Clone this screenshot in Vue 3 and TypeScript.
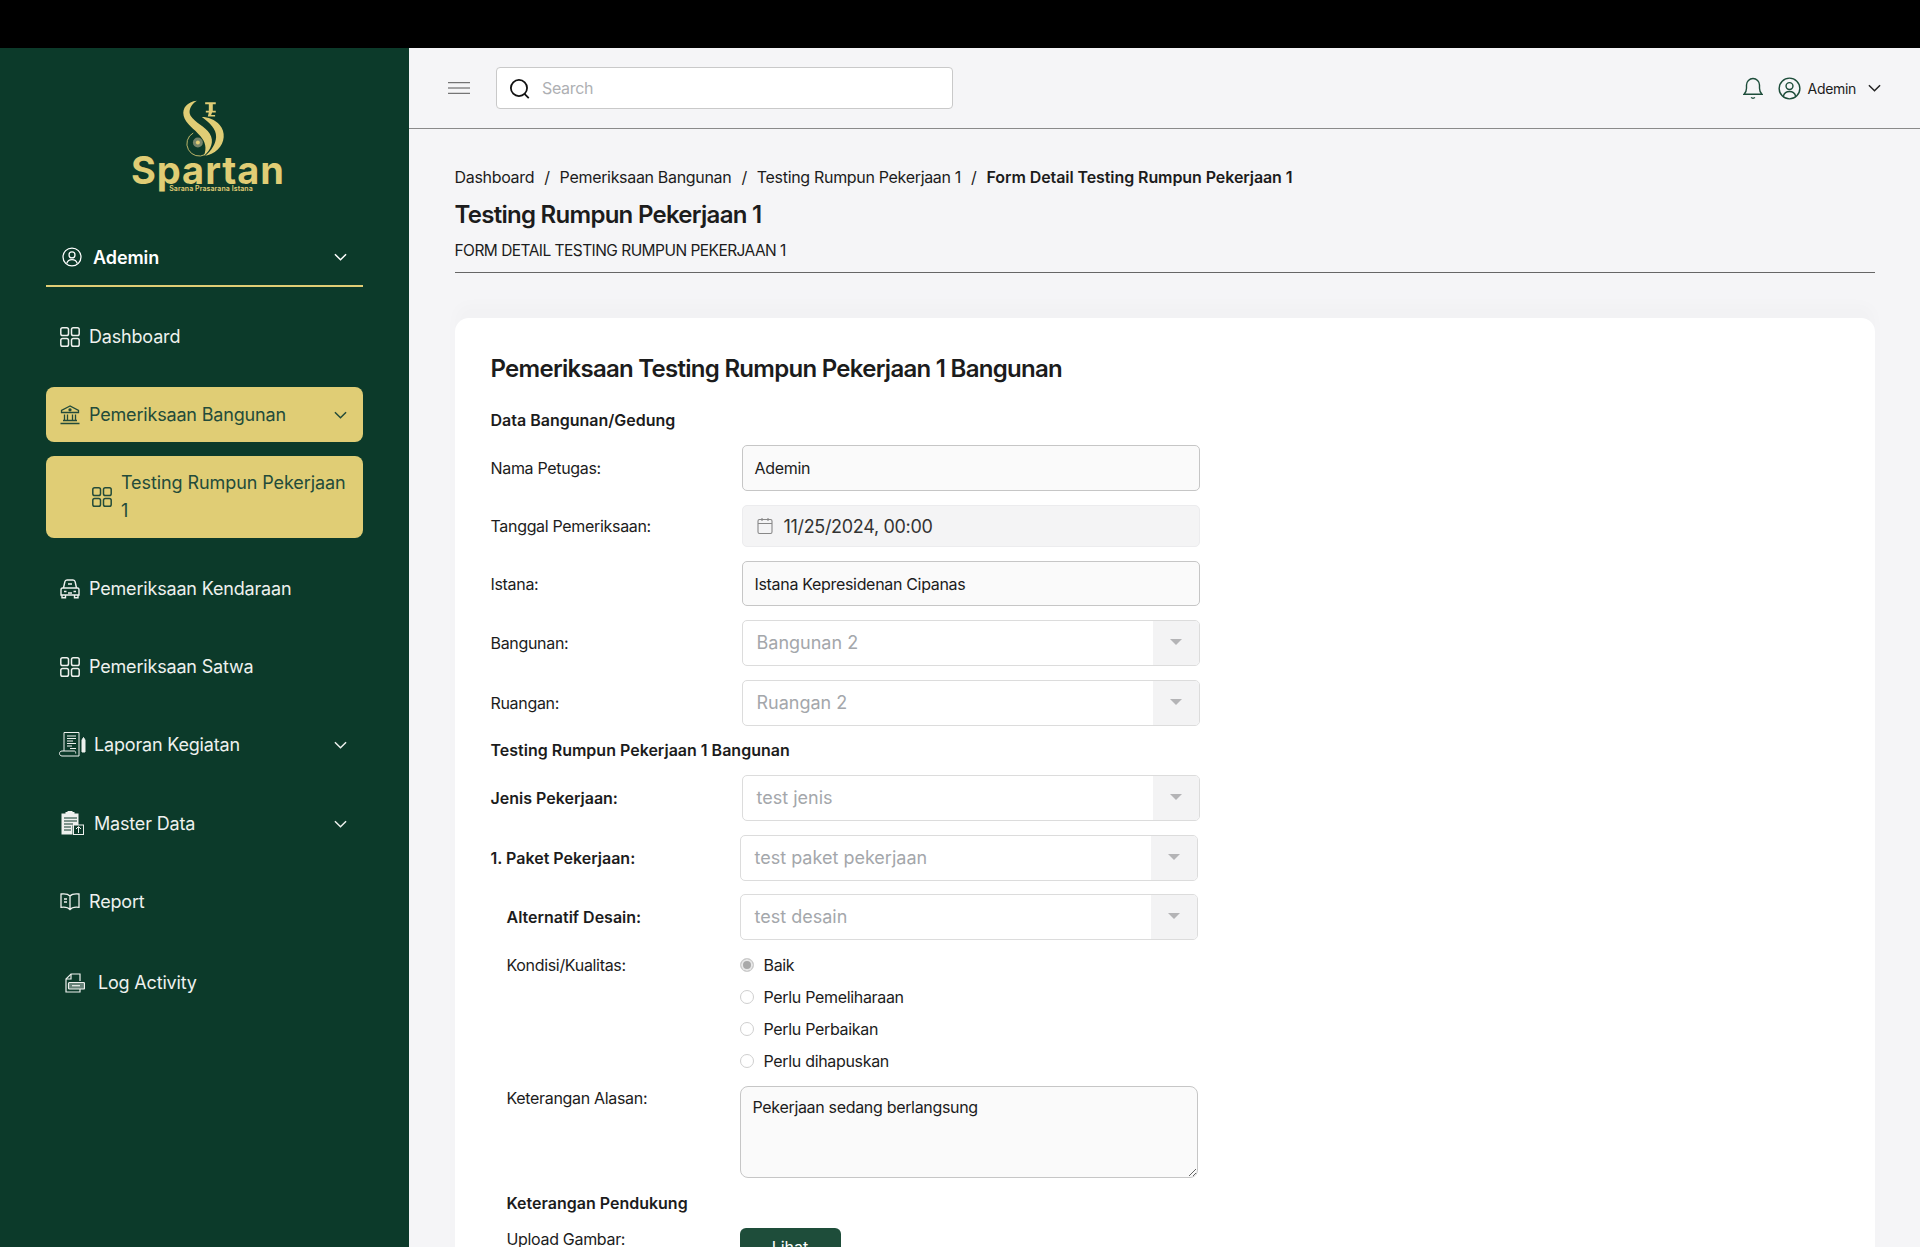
<template>
  <div class="page">
    <div class="top-strip"></div>
    <div class="shell">
      <!-- sidebar -->
      <aside class="sidebar">
        <div class="logo">
          <svg class="logo-mark" viewBox="540 175 160 180" fill="#e0cd75">
            <path d="M597 183C568 186 552 205 557 228C562 252 590 268 608 290C622 307 628 325 618 349C640 330 650 305 636 282C622 260 590 248 578 228C570 214 578 195 597 183Z" />
            <path d="M612 232C630 232 652 240 666 256C684 276 682 310 660 330C648 341 635 347 622 349C642 332 654 312 655 292C656 268 636 250 612 232Z" />
            <path d="M622 187h32v6h-9v20h9v5h-11l-3 8h12v4h-22l3-12h-9v-5h9v-20h-11z" />
            <path d="M586 280A33 33 0 1 0 622 345" fill="none" stroke="#e0cd75" stroke-width="2.5" />
            <circle cx="600" cy="309" r="15" fill="#76846a" />
            <circle cx="600" cy="309" r="6" fill="#e0cd75" />
          </svg>
          <div class="logo-name">Spartan</div>
          <div class="logo-tag">Sarana Prasarana Istana</div>
        </div>

        <div class="user-row">
          <svg class="user-icon" viewBox="0 0 24 24" fill="none" stroke="#fff" stroke-width="1.5">
            <circle cx="12" cy="12" r="10.8" />
            <circle cx="12" cy="9.5" r="3.6" />
            <path d="M5.600 19.800c1-3.200 3.400-4.600 6.400-4.600s5.400 1.400 6.400 4.600" />
          </svg>
          <span class="user-name">Ademin</span>
          <svg class="chev" viewBox="0 0 14 8" fill="none" stroke="currentColor" stroke-width="1.6"><path d="M1 1l6 6 6-6" /></svg>
        </div>

        <nav class="nav">
          <a class="nav-item">
            <svg class="ico" viewBox="0 0 20 20" fill="none" stroke="currentColor" stroke-width="1.5"><rect x=".8" y=".8" width="7.700" height="7.700" rx="1.800" /><rect x="11.500" y=".8" width="7.700" height="7.700" rx="1.800" /><rect x=".8" y="11.500" width="7.700" height="7.700" rx="1.800" /><rect x="11.500" y="11.500" width="7.700" height="7.700" rx="1.800" /></svg>
            <span>Dashboard</span>
          </a>

          <a class="nav-item active">
            <svg class="ico" viewBox="0 0 20 20" fill="none" stroke="currentColor" stroke-width="1.3"><path d="M10 1L1.500 5.500v2h17v-2z" /><circle cx="10" cy="4.800" r="1" fill="currentColor" /><path d="M4.500 9.500v5.500M7.500 9.500v5.500M12.500 9.500v5.500M15.500 9.500v5.500M3 15.500h14M.5 18.500h19" /></svg>
            <span>Pemeriksaan Bangunan</span>
            <svg class="chev" viewBox="0 0 14 8" fill="none" stroke="currentColor" stroke-width="1.6"><path d="M1 1l6 6 6-6" /></svg>
          </a>

          <a class="nav-sub">
            <svg class="ico" viewBox="0 0 20 20" fill="none" stroke="currentColor" stroke-width="1.5"><rect x=".8" y=".8" width="7.700" height="7.700" rx="1.800" /><rect x="11.500" y=".8" width="7.700" height="7.700" rx="1.800" /><rect x=".8" y="11.500" width="7.700" height="7.700" rx="1.800" /><rect x="11.500" y="11.500" width="7.700" height="7.700" rx="1.800" /></svg>
            <span>Testing Rumpun Pekerjaan 1</span>
          </a>

          <a class="nav-item">
            <svg class="ico" viewBox="0 0 20 20" fill="none" stroke="currentColor" stroke-width="1.4"><path d="M3.500 9l1.300-6C5 1.800 5.800 1 7 1h6c1.200 0 2 .8 2.200 2l1.300 6" /><path d="M2.500 9h15c.7 0 1.500 1 1.500 2v5H1v-5c0-1 .8-2 1.500-2z" /><path d="M2 16v2.800h3.500V16M14.500 16v2.800H18V16M4 12.500h2.500M13.500 12.500H16M8 14h4M8 5h4" /></svg>
            <span>Pemeriksaan Kendaraan</span>
          </a>

          <a class="nav-item">
            <svg class="ico" viewBox="0 0 20 20" fill="none" stroke="currentColor" stroke-width="1.5"><rect x=".8" y=".8" width="7.700" height="7.700" rx="1.800" /><rect x="11.500" y=".8" width="7.700" height="7.700" rx="1.800" /><rect x=".8" y="11.500" width="7.700" height="7.700" rx="1.800" /><rect x="11.500" y="11.500" width="7.700" height="7.700" rx="1.800" /></svg>
            <span>Pemeriksaan Satwa</span>
          </a>

          <a class="nav-item wide">
            <svg class="ico-lg" viewBox="0 0 27 27" fill="none" stroke="currentColor" stroke-width="1"><path d="M5 20V1.500h15V25H3c-1.500 0-2.500-1.200-2.500-2.500S1.500 20 3 20h12.500c.8 0 1.200 1 1.200 2.500" /><path d="M8 5h9M8 7.500h9M8 10h6M8 12.500h9M8 15h5M11 17.500h6" /><path d="M23 9l1.500-2.500L26 9v12h-3z" fill="currentColor" /></svg>
            <span>Laporan Kegiatan</span>
            <svg class="chev" viewBox="0 0 14 8" fill="none" stroke="currentColor" stroke-width="1.6"><path d="M1 1l6 6 6-6" /></svg>
          </a>

          <a class="nav-item wide master">
            <svg class="ico-lg" viewBox="0 0 27 27"><path d="M2.500 3.500h4V2h2V1h5v1h2v1.500h4v12h-6v9h-11z" fill="currentColor" /><path d="M5 8h13M5 11h13M5 14h9M5 17h7M5 20h7" stroke="#0c3a2a" stroke-width="1.200" /><rect x="14.500" y="15" width="10" height="9.500" fill="#0c3a2a" stroke="currentColor" /><path d="M19.500 23v-6M17 19l2.500-2.500L22 19" stroke="currentColor" fill="none" /></svg>
            <span>Master Data</span>
            <svg class="chev" viewBox="0 0 14 8" fill="none" stroke="currentColor" stroke-width="1.6"><path d="M1 1l6 6 6-6" /></svg>
          </a>

          <a class="nav-item">
            <svg class="ico" viewBox="0 0 20 20" fill="none" stroke="currentColor" stroke-width="1.300"><path d="M10 4C8.500 2.300 5 1.500 1 2v13.300c4-.5 7.500.3 9 2.200 1.500-1.900 5-2.700 9-2.200V2c-4-.5-7.500.3-9 2zM10 4v13.500M4 7h3M4 10h3" /></svg>
            <span>Report</span>
          </a>

          <a class="nav-item log">
            <svg class="ico" viewBox="0 0 20 20" fill="none" stroke="currentColor" stroke-width="1.200"><path d="M15 8V1H6L1 6v13h14v-3" /><path d="M6 1v5H1" /><rect x="3.500" y="9.500" width="16" height="6.500" rx="1" fill="currentColor" fill-opacity=".4" /><path d="M7 12.700h8" /></svg>
            <span>Log Activity</span>
          </a>
        </nav>
      </aside>

      <main class="main">
        <header class="topbar">
          <svg class="burger" viewBox="0 0 22 12" fill="none" stroke="#555" stroke-width="1"><path d="M0 .7h22M0 6h22M0 11.300h22" /></svg>
          <div class="search">
            <svg class="search-icon" viewBox="0 0 20 20" fill="none" stroke="#111" stroke-width="1.700"><circle cx="9.500" cy="9.500" r="7.700" /><path d="M14.800 15.200l4 4" /></svg>
            <span class="search-text">Search</span>
          </div>
          <div class="top-right">
            <svg class="bell" viewBox="0 0 20 22" fill="none" stroke="#1d4d3a" stroke-width="1.400"><path d="M1 17.300c1.700-1.500 2.500-3 2.500-6V8a6.500 6.500 0 0 1 13 0v3.300c0 3 .8 4.500 2.500 6z" /><path d="M8 20.500c1.200.8 2.800.8 4 0" /></svg>
            <svg class="top-user" viewBox="0 0 24 24" fill="none" stroke="#1d4d3a" stroke-width="1.500"><circle cx="12" cy="12" r="10.800" /><circle cx="12" cy="9.500" r="3.600" /><path d="M5.600 19.800c1-3.200 3.400-4.600 6.400-4.600s5.400 1.400 6.400 4.600" /></svg>
            <span class="top-name">Ademin</span>
            <svg class="top-chev" viewBox="0 0 14 8" fill="none" stroke="#222" stroke-width="1.600"><path d="M1 1l6 6 6-6" /></svg>
          </div>
        </header>

        <div class="content">
          <div class="crumbs">
            <span>Dashboard</span><i>/</i><span>Pemeriksaan Bangunan</span><i>/</i><span>Testing Rumpun Pekerjaan 1</span><i>/</i><b>Form Detail Testing Rumpun Pekerjaan 1</b>
          </div>
          <h1 class="page-title">Testing Rumpun Pekerjaan 1</h1>
          <div class="page-sub">FORM DETAIL TESTING RUMPUN PEKERJAAN 1</div>

          <section class="card">
            <h2 class="card-title">Pemeriksaan Testing Rumpun Pekerjaan 1 Bangunan</h2>

            <h3 class="section-title first">Data Bangunan/Gedung</h3>
            <div class="row">
              <label>Nama Petugas:</label>
              <div class="field">Ademin</div>
            </div>
            <div class="row">
              <label>Tanggal Pemeriksaan:</label>
              <div class="field date">
                <svg class="cal" viewBox="0 0 16 18" fill="none" stroke="#888" stroke-width="1.100"><rect x="1" y="2.500" width="14" height="14" rx="1.500" /><path d="M1 6.500h14M5 1v3M11 1v3" /></svg>
                <span>11/25/2024, 00:00</span>
              </div>
            </div>
            <div class="row">
              <label>Istana:</label>
              <div class="field short">Istana Kepresidenan Cipanas</div>
            </div>
            <div v-for="s in lokasi" :key="s.label" class="row">
              <label>{{ s.label }}</label>
              <div class="select"><span>{{ s.value }}</span><em></em></div>
            </div>

            <h3 class="section-title second">Testing Rumpun Pekerjaan 1 Bangunan</h3>
            <div class="row">
              <label class="strong">Jenis Pekerjaan:</label>
              <div class="select"><span>test jenis</span><em></em></div>
            </div>
            <div class="row snug tight">
              <label class="strong">1. Paket Pekerjaan:</label>
              <div class="select"><span>test paket pekerjaan</span><em></em></div>
            </div>
            <div class="nested">
              <div class="row snug">
                <label class="strong">Alternatif Desain:</label>
                <div class="select"><span>test desain</span><em></em></div>
              </div>
              <div class="row radios-row">
                <label>Kondisi/Kualitas:</label>
                <div class="radios">
                  <div v-for="(r, i) in kondisi" :key="r" class="radio">
                    <span class="dot" :class="{ on: i === 0 }"></span>{{ r }}
                  </div>
                </div>
              </div>
              <div class="row note-row">
                <label>Keterangan Alasan:</label>
                <textarea readonly class="note">Pekerjaan sedang berlangsung</textarea>
              </div>
              <h3 class="section-title support">Keterangan Pendukung</h3>
              <div class="row upload-row">
                <label>Upload Gambar:</label>
                <button class="btn">Lihat</button>
              </div>
            </div>
          </section>
        </div>
      </main>
    </div>
  </div>
</template>

<script setup lang="ts">
const lokasi = [
  { label: 'Bangunan:', value: 'Bangunan 2' },
  { label: 'Ruangan:', value: 'Ruangan 2' }
]

const kondisi = ['Baik', 'Perlu Pemeliharaan', 'Perlu Perbaikan', 'Perlu dihapuskan']
</script>

<style>
html,
body {
  margin: 0;
  overflow: hidden;
}
</style>

<style scoped>
.page {
  height: 1247px;
  overflow: hidden;
  display: flex;
  flex-direction: column;
  font-family: Inter, "Open Sans", sans-serif;
  letter-spacing: -0.02em;
  color: #1c1c1c;
  background: #f5f5f7;
}

.top-strip {
  height: 48px;
  flex: none;
  background: #000;
}

.shell {
  flex: 1;
  display: flex;
  min-height: 0;
}

/* sidebar */
.sidebar {
  width: 409px;
  flex: none;
  background: #0c3a2a;
  padding: 50px 46px 0;
  box-sizing: border-box;
  color: #eef1ee;
}

.logo {
  display: flex;
  flex-direction: column;
  align-items: center;
  height: 142px;
  color: #e0cd75;
  margin-left: 7px;
}

.logo-mark {
  width: 53px;
  height: 60px;
  flex: none;
  margin-left: -8px;
}

.logo-name {
  font-weight: 700;
  font-size: 38px;
  line-height: 38px;
  letter-spacing: 0.025em;
  margin-top: -7px;
}

.logo-tag {
  font-size: 7px;
  font-weight: 600;
  line-height: 8px;
  letter-spacing: 0.01em;
  margin-top: -4px;
  margin-left: 6px;
}

.user-row {
  display: flex;
  align-items: center;
  height: 34px;
  padding: 0 16px 11px 16px;
  border-bottom: 2px solid #e0cd75;
  color: #fff;
}

.user-icon {
  width: 20px;
  height: 20px;
  margin-right: 11px;
  flex: none;
}

.user-name {
  font-size: 18px;
  font-weight: 600;
  letter-spacing: -0.005em;
}

.chev {
  width: 13px;
  height: 8px;
  margin-left: auto;
  flex: none;
}

.nav {
  display: flex;
  flex-direction: column;
  gap: 23px;
  padding-top: 22px;
}

.nav-item {
  display: flex;
  align-items: center;
  height: 55px;
  padding: 0 16px 0 14px;
  font-size: 18px;
  letter-spacing: -0.01em;
  border-radius: 8px;
}

.ico {
  width: 20px;
  height: 20px;
  flex: none;
  margin-right: 9px;
}

.ico-lg {
  width: 27px;
  height: 27px;
  flex: none;
  margin: 0 8px 0 -1px;
}

.active {
  background: #e0cd75;
  color: #234b3a;
}

.nav-sub {
  display: flex;
  align-items: center;
  min-height: 82px;
  margin-top: -9px;
  padding: 0 14px 0 46px;
  box-sizing: border-box;
  font-size: 18px;
  line-height: 28px;
  letter-spacing: -0.005em;
  background: #e0cd75;
  color: #234b3a;
  border-radius: 8px;
}

.master {
  margin-top: 1px;
}

.log {
  margin-top: 3px;
  padding-left: 19px;
}

.log .ico {
  margin-right: 13px;
}

/* main */
.main {
  flex: 1;
  min-width: 0;
  display: flex;
  flex-direction: column;
}

.topbar {
  height: 81px;
  flex: none;
  box-sizing: border-box;
  display: flex;
  align-items: center;
  padding: 0 39px;
  border-bottom: 1.500px solid #8a8a8a;
}

.burger {
  width: 22px;
  height: 12px;
  flex: none;
}

.search {
  width: 457px;
  height: 42px;
  margin-left: 26px;
  box-sizing: border-box;
  display: flex;
  align-items: center;
  padding-left: 12px;
  background: #fff;
  border: 1px solid #c9c9c9;
  border-radius: 4px;
}

.search-icon {
  width: 21px;
  height: 21px;
  flex: none;
}

.search-text {
  margin-left: 12px;
  font-size: 16px;
  color: #aeb0b3;
}

.top-right {
  margin-left: auto;
  display: flex;
  align-items: center;
}

.bell {
  width: 20px;
  height: 22px;
}

.top-user {
  width: 23px;
  height: 23px;
  margin-left: 15px;
}

.top-name {
  margin-left: 7px;
  font-size: 14px;
}

.top-chev {
  width: 13px;
  height: 8px;
  margin-left: 12px;
}

.content {
  padding: 33px 45px 0 45.5px;
}

.crumbs {
  height: 30px;
  display: flex;
  align-items: center;
  font-size: 16px;
}

.crumbs i {
  font-style: normal;
  margin: 0 10px;
}

.crumbs b {
  font-weight: 600;
  letter-spacing: -0.005em;
}

.page-title {
  margin: 7px 0 0;
  font-size: 24px;
  line-height: 32px;
  font-weight: 600;
  letter-spacing: -0.03em;
}

.page-sub {
  margin-top: 8px;
  height: 33px;
  font-size: 15.500px;
  line-height: 24px;
  letter-spacing: -0.035em;
  border-bottom: 1px solid #666;
}

.card {
  margin-top: 45px;
  padding: 36px 36px 40px;
  background: #fff;
  border-radius: 14px;
  box-shadow: 0 -14px 14px rgba(0, 0, 0, 0.014);
}

.card-title {
  margin: 0;
  font-size: 24px;
  line-height: 30px;
  font-weight: 600;
  letter-spacing: -0.03em;
}

.section-title {
  margin: 0;
  font-size: 16px;
  line-height: 24px;
  font-weight: 600;
  letter-spacing: 0;
}

.section-title.first {
  margin: 24px 0 13px;
}

.section-title.second {
  line-height: 20px;
  margin: 14px 0 15px;
}

.row {
  display: flex;
  align-items: center;
  margin-bottom: 14px;
}

.row.snug {
  margin-bottom: 13px;
}

.row label {
  width: 251px;
  flex: none;
  font-size: 16px;
  line-height: 24px;
}

.row label.strong {
  font-weight: 600;
  letter-spacing: 0;
}

.field {
  width: 458px;
  height: 46px;
  box-sizing: border-box;
  display: flex;
  align-items: center;
  padding: 0 12px;
  font-size: 16px;
  background: #fafafa;
  border: 1px solid #c6c6c6;
  border-radius: 5px;
}

.field.short {
  height: 45px;
}

.field.date {
  height: 42px;
  padding-left: 14px;
  font-size: 18px;
  background: #f4f4f5;
  border-color: #ececee;
  color: #333;
}

.cal {
  width: 16px;
  height: 18px;
  margin-right: 11px;
  flex: none;
}

.select {
  width: 458px;
  height: 46px;
  box-sizing: border-box;
  display: flex;
  align-items: center;
  padding-left: 14px;
  font-size: 18px;
  letter-spacing: 0;
  color: #a4a7ab;
  background: #fff;
  border: 1px solid #dcdcdc;
  border-radius: 5px;
  overflow: hidden;
}

.select span {
  margin-top: -2px;
}

.select em {
  margin-left: auto;
  width: 46px;
  height: 100%;
  flex: none;
  background: #f3f3f4;
  display: flex;
  align-items: center;
  justify-content: center;
}

.select em::after {
  content: "";
  border-left: 6px solid transparent;
  border-right: 6px solid transparent;
  border-top: 6px solid #b4b4b6;
  margin-top: -2px;
}

.tight label {
  width: 249px;
}

.nested {
  padding-left: 16px;
}

.nested .row label {
  width: 233px;
}

.radios-row {
  align-items: flex-start;
  margin: -4px 0 9px;
}

.radios-row label {
  line-height: 32px;
}

.radio {
  display: flex;
  align-items: center;
  height: 32px;
  font-size: 16px;
}

.dot {
  width: 14px;
  height: 14px;
  box-sizing: border-box;
  margin-right: 10px;
  border: 1px solid #cfcfcf;
  border-radius: 50%;
  background: #fff;
}

.dot.on {
  background: #a9a9a9;
  box-shadow: inset 0 0 0 2px #e8e8e8;
}

.note-row {
  align-items: flex-start;
  margin-bottom: 13px;
}

.note {
  width: 458px;
  height: 92px;
  box-sizing: border-box;
  padding: 10px 12px;
  font: inherit;
  font-size: 16px;
  letter-spacing: -0.02em;
  color: #1c1c1c;
  background: #fafafa;
  border: 1px solid #c6c6c6;
  border-radius: 8px;
  outline: none;
  resize: vertical;
}

.support {
  margin: 0 0 13px;
}

.upload-row {
  align-items: flex-start;
}

.upload-row label {
  margin-top: -1px;
}

.btn {
  width: 101px;
  height: 38px;
  font: inherit;
  font-size: 16px;
  color: #fff;
  background: #1e4d3a;
  border: none;
  border-radius: 6px;
}
</style>
